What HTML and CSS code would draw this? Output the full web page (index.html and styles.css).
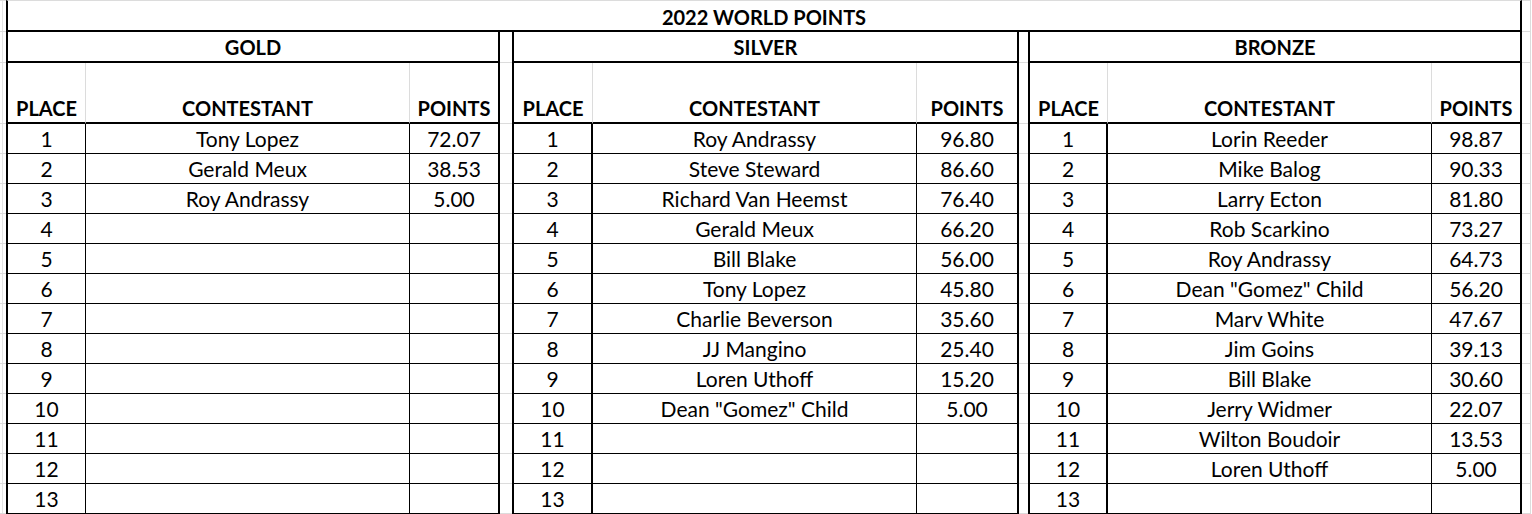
FILE: index.html
```html
<!DOCTYPE html>
<html lang="en">
<head>
<meta charset="utf-8">
<title>2022 World Points</title>
<link rel="stylesheet" href="styles.css">
</head>
<body>
<div class="sheet" role="table">
  <div class="row" role="row">
    <div class="c edge top"></div>
    <div class="c title" role="columnheader">2022 WORLD POINTS</div>
    <div class="c redge top"></div>
  </div>
  <div class="row" role="row">
    <div class="c edge"></div>
    <div class="c group">GOLD</div>
    <div class="c gap"></div>
    <div class="c group">SILVER</div>
    <div class="c gap"></div>
    <div class="c group">BRONZE</div>
    <div class="c redge"></div>
  </div>
  <div class="row hdr" role="row">
    <div class="c edge"></div>
    <div class="c pl">PLACE</div><div class="c ct">CONTESTANT</div><div class="c pt">POINTS</div>
    <div class="c gap"></div>
    <div class="c pl">PLACE</div><div class="c ct">CONTESTANT</div><div class="c pt">POINTS</div>
    <div class="c gap"></div>
    <div class="c pl">PLACE</div><div class="c ct">CONTESTANT</div><div class="c pt">POINTS</div>
    <div class="c redge"></div>
  </div>

  <div class="row" role="row">
    <div class="c edge"></div>
    <div class="c pl">1</div><div class="c ct">Tony Lopez</div><div class="c pt">72.07</div>
    <div class="c gap"></div>
    <div class="c pl wide">1</div><div class="c ct">Roy Andrassy</div><div class="c pt">96.80</div>
    <div class="c gap"></div>
    <div class="c pl wide">1</div><div class="c ct">Lorin Reeder</div><div class="c pt">98.87</div>
    <div class="c redge"></div>
  </div>
  <div class="row" role="row">
    <div class="c edge"></div>
    <div class="c pl">2</div><div class="c ct">Gerald Meux</div><div class="c pt">38.53</div>
    <div class="c gap"></div>
    <div class="c pl wide">2</div><div class="c ct">Steve Steward</div><div class="c pt">86.60</div>
    <div class="c gap"></div>
    <div class="c pl wide">2</div><div class="c ct">Mike Balog</div><div class="c pt">90.33</div>
    <div class="c redge"></div>
  </div>
  <div class="row" role="row">
    <div class="c edge"></div>
    <div class="c pl">3</div><div class="c ct">Roy Andrassy</div><div class="c pt">5.00</div>
    <div class="c gap"></div>
    <div class="c pl wide">3</div><div class="c ct">Richard Van Heemst</div><div class="c pt">76.40</div>
    <div class="c gap"></div>
    <div class="c pl wide">3</div><div class="c ct">Larry Ecton</div><div class="c pt">81.80</div>
    <div class="c redge"></div>
  </div>
  <div class="row" role="row">
    <div class="c edge"></div>
    <div class="c pl">4</div><div class="c ct"></div><div class="c pt"></div>
    <div class="c gap"></div>
    <div class="c pl wide">4</div><div class="c ct">Gerald Meux</div><div class="c pt">66.20</div>
    <div class="c gap"></div>
    <div class="c pl wide">4</div><div class="c ct">Rob Scarkino</div><div class="c pt">73.27</div>
    <div class="c redge"></div>
  </div>
  <div class="row" role="row">
    <div class="c edge"></div>
    <div class="c pl">5</div><div class="c ct"></div><div class="c pt"></div>
    <div class="c gap"></div>
    <div class="c pl wide">5</div><div class="c ct">Bill Blake</div><div class="c pt">56.00</div>
    <div class="c gap"></div>
    <div class="c pl wide">5</div><div class="c ct">Roy Andrassy</div><div class="c pt">64.73</div>
    <div class="c redge"></div>
  </div>
  <div class="row" role="row">
    <div class="c edge"></div>
    <div class="c pl">6</div><div class="c ct"></div><div class="c pt"></div>
    <div class="c gap"></div>
    <div class="c pl wide">6</div><div class="c ct">Tony Lopez</div><div class="c pt">45.80</div>
    <div class="c gap"></div>
    <div class="c pl wide">6</div><div class="c ct">Dean "Gomez" Child</div><div class="c pt">56.20</div>
    <div class="c redge"></div>
  </div>
  <div class="row" role="row">
    <div class="c edge"></div>
    <div class="c pl">7</div><div class="c ct"></div><div class="c pt"></div>
    <div class="c gap"></div>
    <div class="c pl wide">7</div><div class="c ct">Charlie Beverson</div><div class="c pt">35.60</div>
    <div class="c gap"></div>
    <div class="c pl wide">7</div><div class="c ct">Marv White</div><div class="c pt">47.67</div>
    <div class="c redge"></div>
  </div>
  <div class="row" role="row">
    <div class="c edge"></div>
    <div class="c pl">8</div><div class="c ct"></div><div class="c pt"></div>
    <div class="c gap"></div>
    <div class="c pl wide">8</div><div class="c ct">JJ Mangino</div><div class="c pt">25.40</div>
    <div class="c gap"></div>
    <div class="c pl wide">8</div><div class="c ct">Jim Goins</div><div class="c pt">39.13</div>
    <div class="c redge"></div>
  </div>
  <div class="row" role="row">
    <div class="c edge"></div>
    <div class="c pl">9</div><div class="c ct"></div><div class="c pt"></div>
    <div class="c gap"></div>
    <div class="c pl wide">9</div><div class="c ct">Loren Uthoff</div><div class="c pt">15.20</div>
    <div class="c gap"></div>
    <div class="c pl wide">9</div><div class="c ct">Bill Blake</div><div class="c pt">30.60</div>
    <div class="c redge"></div>
  </div>
  <div class="row" role="row">
    <div class="c edge"></div>
    <div class="c pl">10</div><div class="c ct"></div><div class="c pt"></div>
    <div class="c gap"></div>
    <div class="c pl wide">10</div><div class="c ct">Dean "Gomez" Child</div><div class="c pt">5.00</div>
    <div class="c gap"></div>
    <div class="c pl wide">10</div><div class="c ct">Jerry Widmer</div><div class="c pt">22.07</div>
    <div class="c redge"></div>
  </div>
  <div class="row" role="row">
    <div class="c edge"></div>
    <div class="c pl">11</div><div class="c ct"></div><div class="c pt"></div>
    <div class="c gap"></div>
    <div class="c pl wide">11</div><div class="c ct"></div><div class="c pt"></div>
    <div class="c gap"></div>
    <div class="c pl wide">11</div><div class="c ct">Wilton Boudoir</div><div class="c pt">13.53</div>
    <div class="c redge"></div>
  </div>
  <div class="row" role="row">
    <div class="c edge"></div>
    <div class="c pl">12</div><div class="c ct"></div><div class="c pt"></div>
    <div class="c gap"></div>
    <div class="c pl wide">12</div><div class="c ct"></div><div class="c pt"></div>
    <div class="c gap"></div>
    <div class="c pl wide">12</div><div class="c ct">Loren Uthoff</div><div class="c pt">5.00</div>
    <div class="c redge"></div>
  </div>
  <div class="row" role="row">
    <div class="c edge"></div>
    <div class="c pl">13</div><div class="c ct"></div><div class="c pt"></div>
    <div class="c gap"></div>
    <div class="c pl wide">13</div><div class="c ct"></div><div class="c pt"></div>
    <div class="c gap"></div>
    <div class="c pl wide">13</div><div class="c ct"></div><div class="c pt"></div>
    <div class="c redge"></div>
  </div>
</div>
</body>
</html>
```

FILE: styles.css
```css
html, body {
  margin: 0;
  padding: 0;
  background: #fff;
}

.sheet {
  display: grid;
  grid-template-columns: 6px 80px 324px 90px 12px 81px 324px 102px 9px 80px 324px 90px 10px;
  grid-template-rows: 32px 31px 61px repeat(13, 30px);
  width: 1532px;
  font-family: "Lato", "Carlito", "Liberation Sans", sans-serif;
  font-size: 21px;
  color: #000;
}

.row {
  display: contents;
}

.c {
  box-sizing: border-box;
  display: flex;
  align-items: flex-end;
  justify-content: center;
  line-height: 24px;
  padding-bottom: 2px;
  white-space: nowrap;
  overflow: hidden;
  border-bottom: 1px solid #000;
}

.edge {
  border-bottom-color: #dcdcdc;
  background: linear-gradient(to right, transparent 2px, #e4e4e4 2px, #e4e4e4 3px, transparent 3px);
}

.redge {
  border-bottom-color: #dcdcdc;
  border-right: 1px solid #dcdcdc;
  margin-right: 1px;
}

.top {
  border-top: 1px solid #dcdcdc;
}

.gap {
  border-bottom-color: #dcdcdc;
}

.title {
  grid-column: span 11;
  font-size: 20px;
  font-weight: 700;
  border-top: 1px solid #dcdcdc;
  border-left: 2px solid #000;
  border-right: 2px solid #000;
  border-bottom-width: 2px;
  padding-bottom: 1px;
}

.group {
  grid-column: span 3;
  font-size: 20px;
  font-weight: 700;
  border-left: 2px solid #000;
  border-right: 2px solid #000;
  border-bottom-width: 2px;
}

.pl {
  border-left: 2px solid #000;
  border-right: 1px solid #000;
}

.pl.wide {
  border-right-width: 2px;
}

.ct {
  border-right: 1px solid #000;
}

.pt {
  border-right: 2px solid #000;
}

.hdr .c {
  font-size: 20px;
  font-weight: 700;
}

.hdr .pl,
.hdr .pt,
.hdr .ct {
  border-bottom-width: 2px;
}

.hdr .pl,
.hdr .ct {
  border-right: 1px solid #dcdcdc;
}

.hdr .edge,
.hdr .gap,
.hdr .redge {
  font-weight: 400;
}
```
